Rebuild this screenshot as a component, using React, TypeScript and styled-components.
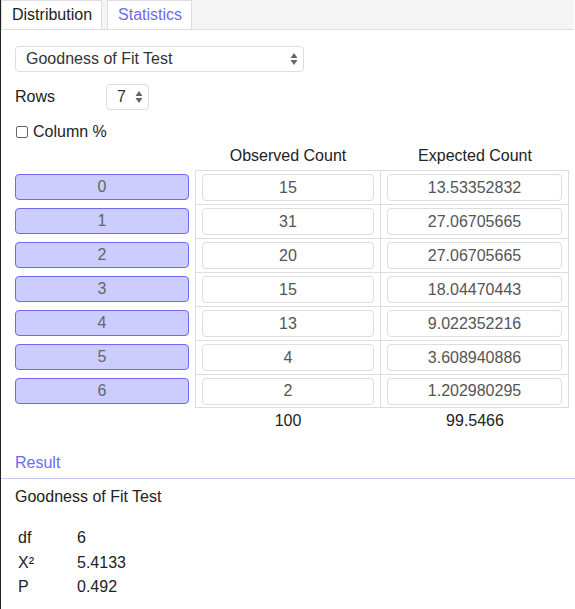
import React from "react";
import styled, { createGlobalStyle } from "styled-components";

const GlobalStyle = createGlobalStyle`
  body {
    margin: 0;
    background: #fff;
    font-family: "Liberation Sans", Arial, sans-serif;
    font-size: 16px;
    line-height: 18px;
    color: #222;
  }
`;

const Frame = styled.div`
  border-left: 1px solid #222;
  min-height: 609px;
  box-sizing: border-box;
`;

const TabBar = styled.div`
  display: flex;
  align-items: flex-end;
  gap: 5px;
  height: 30px;
  box-sizing: border-box;
  background: #f5f5f5;
  border-bottom: 1px solid #ddd;
  margin-right: 1px;
`;

const Tab = styled.div<{ $active?: boolean }>`
  height: 29px;
  box-sizing: border-box;
  padding: 5px 9px 0 10px;
  background: #fff;
  border: 1px solid #ddd;
  border-bottom: none;
  color: ${(p) => (p.$active ? "#6b6bf5" : "#222")};
`;

const Body = styled.div`
  padding: 16px 6px 0 14px;
`;

const Select = styled.div<{ $width: number }>`
  display: flex;
  align-items: center;
  justify-content: space-between;
  width: ${(p) => p.$width}px;
  height: 26px;
  box-sizing: border-box;
  border: 1px solid #ddd;
  border-radius: 4px;
  padding: 0 5px 0 10px;
  color: #333;
`;

const Arrows = () => (
  <svg width="8" height="14" viewBox="0 0 8 14">
    <path d="M4 1 L7.5 6 L0.5 6 Z" fill="#666" />
    <path d="M4 13 L7.5 8 L0.5 8 Z" fill="#666" />
  </svg>
);

const FormRow = styled.div`
  display: flex;
  align-items: center;
  margin-top: 12px;
`;

const RowsLabel = styled.span`
  width: 91px;
`;

const CheckRow = styled.label`
  display: flex;
  align-items: center;
  gap: 5px;
  margin-top: 13px;
`;

const Check = styled.span`
  width: 12px;
  height: 12px;
  border: 1px solid #666;
  border-radius: 2px;
  box-sizing: border-box;
  margin-left: 1px;
`;

const Grid = styled.div`
  display: grid;
  grid-template-columns: 180px 186px 188px;
  margin-top: 6px;
`;

const Header = styled.div`
  text-align: center;
  padding-bottom: 5px;
`;

const LabelCell = styled.div`
  display: flex;
  align-items: center;
  padding-right: 6px;
  height: 34px;
  box-sizing: border-box;
`;

const LabelButton = styled.div`
  flex: 1;
  height: 26px;
  box-sizing: border-box;
  border: 1px solid #6b6bf5;
  border-radius: 4px;
  background: #ccccff;
  color: #666;
  display: flex;
  align-items: center;
  justify-content: center;
`;

const DataCell = styled.div<{ $first?: boolean; $last?: boolean }>`
  display: flex;
  align-items: center;
  padding: 0 6px;
  height: 34px;
  box-sizing: border-box;
  border-left: ${(p) => (p.$first ? "1px solid #ddd" : "none")};
  border-right: 1px solid #ddd;
  border-top: 1px solid #ddd;
  border-bottom: ${(p) => (p.$last ? "1px solid #ddd" : "none")};
`;

const Input = styled.div`
  flex: 1;
  height: 27px;
  box-sizing: border-box;
  border: 1px solid #ddd;
  border-radius: 4px;
  color: #555;
  display: flex;
  align-items: center;
  justify-content: center;
`;

const Total = styled.div`
  text-align: center;
  padding-top: 4px;
`;

const SectionTitle = styled.div`
  margin-top: 24px;
  color: #6b6bf5;
  padding-bottom: 6px;
  border-bottom: 1px solid #c8c8f0;
  margin-left: -14px;
  padding-left: 14px;
  margin-right: -6px;
`;

const ResultTitle = styled.div`
  margin-top: 9px;
`;

const StatTable = styled.div`
  display: grid;
  grid-template-columns: 59px auto;
  row-gap: 6.5px;
  margin-top: 23px;
  padding-left: 3px;
`;

const rows = [
  ["0", "15", "13.53352832"],
  ["1", "31", "27.06705665"],
  ["2", "20", "27.06705665"],
  ["3", "15", "18.04470443"],
  ["4", "13", "9.022352216"],
  ["5", "4", "3.608940886"],
  ["6", "2", "1.202980295"],
];

export default function App() {
  return (
    <Frame>
      <GlobalStyle />
      <TabBar>
        <Tab>Distribution</Tab>
        <Tab $active>Statistics</Tab>
      </TabBar>
      <Body>
        <Select $width={289}>
          Goodness of Fit Test
          <Arrows />
        </Select>
        <FormRow>
          <RowsLabel>Rows</RowsLabel>
          <Select $width={43}>
            7
            <Arrows />
          </Select>
        </FormRow>
        <CheckRow>
          <Check />
          Column %
        </CheckRow>
        <Grid>
          <div />
          <Header>Observed Count</Header>
          <Header>Expected Count</Header>
          {rows.map(([label, obs, exp], i) => (
            <React.Fragment key={label}>
              <LabelCell>
                <LabelButton>{label}</LabelButton>
              </LabelCell>
              <DataCell $first $last={i === rows.length - 1}>
                <Input>{obs}</Input>
              </DataCell>
              <DataCell $last={i === rows.length - 1}>
                <Input>{exp}</Input>
              </DataCell>
            </React.Fragment>
          ))}
          <div />
          <Total>100</Total>
          <Total>99.5466</Total>
        </Grid>
        <SectionTitle>Result</SectionTitle>
        <ResultTitle>Goodness of Fit Test</ResultTitle>
        <StatTable>
          <span>df</span>
          <span>6</span>
          <span>X²</span>
          <span>5.4133</span>
          <span>P</span>
          <span>0.492</span>
        </StatTable>
      </Body>
    </Frame>
  );
}
